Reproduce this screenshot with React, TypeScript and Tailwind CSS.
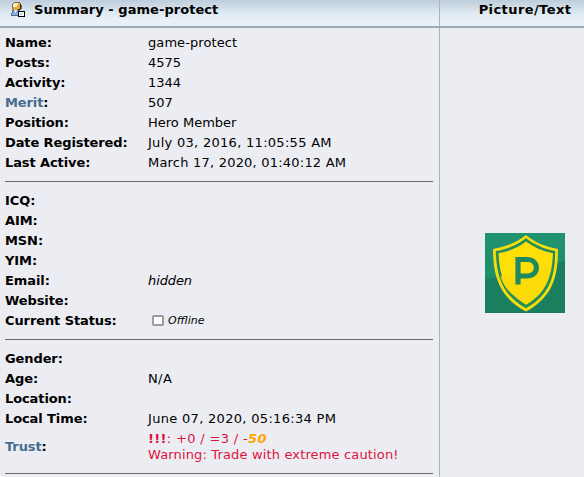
import React from 'react';

type Row = { label: string; value?: React.ReactNode; link?: boolean };

const general: Row[] = [
  { label: 'Name', value: <span className="tracking-[0.08px]">game-protect</span> },
  { label: 'Posts', value: '4575' },
  { label: 'Activity', value: '1344' },
  { label: 'Merit', value: '507', link: true },
  { label: 'Position', value: 'Hero Member' },
  { label: 'Date Registered', value: <span className="tracking-[0.29px]">July 03, 2016, 11:05:55 AM</span> },
  { label: 'Last Active', value: <span className="tracking-[0.21px]">March 17, 2020, 01:40:12 AM</span> },
];

const contact: Row[] = [
  { label: 'ICQ' },
  { label: 'AIM' },
  { label: 'MSN' },
  { label: 'YIM' },
  { label: 'Email', value: <i className="tracking-[-0.1px]">hidden</i> },
  { label: 'Website' },
  {
    label: 'Current Status',
    value: (
      <span className="flex items-center">
        <span className="mb-px ml-1 mr-[4px] h-[11px] w-3 rounded-[2px] border-2 border-[#9c9c9c] bg-white" />
        <i className="text-[11px]">Offline</i>
      </span>
    ),
  },
];

const personal: Row[] = [
  { label: 'Gender' },
  { label: 'Age', value: <span className="tracking-[0.4px]">N/A</span> },
  { label: 'Location' },
  { label: 'Local Time', value: <span className="tracking-[0.31px]">June 07, 2020, 05:16:34 PM</span> },
];

function Line({ label, value, link }: Row) {
  return (
    <div className="flex h-5 items-center">
      <b className="w-[143px] shrink-0 tracking-[-0.1px]">
        <span className={link ? 'text-[#476c8e]' : ''}>{label}</span>:
      </b>
      <span>{value}</span>
    </div>
  );
}

function Rule() {
  return <div className="h-px w-[428px] bg-[#67696d]" />;
}

function MemberIcon() {
  return (
    <svg className="shrink-0" width="16" height="18" viewBox="0 0 16 18" shapeRendering="crispEdges">
      <path d="M4 2h6v1h1v2h1v4h-1v1h-1v1H4v-1H3V9H2V4h1V3h1z" fill="#77694e" />
      <path d="M4 3h6v2h1v4h-1v1H4V9H3V4h1z" fill="#e5aa38" />
      <path d="M4 3h4v2H7v2H3V4h1z" fill="#fff0c8" />
      <path d="M10 4h1v5h-1v1H8V9h2z" fill="#342b1b" />
      <path d="M2 10h8v1h1v5H1v-3h1z" fill="#4e7297" />
      <path d="M3 11h5v4H2v-2h1z" fill="#8bb0d6" />
      <path d="M4 10h3v1H6v2H5v-2H4z" fill="#e7edf4" />
      <path d="M8 11h7v6H8z" fill="#000" />
      <path d="M9 12h5v4H9z" fill="#fff" />
      <path d="M10 13h1v1h-1zM12 13h1v1h-1zM11 14h1v1h-1z" fill="#9acbc5" />
    </svg>
  );
}

function Shield() {
  return (
    <svg width="80" height="80" viewBox="0 0 80 80">
      <defs>
        <linearGradient id="field" x2="0" y2="1">
          <stop stopColor="#219370" />
          <stop offset="1" stopColor="#1b8966" />
        </linearGradient>
      </defs>
      <path fill="url(#field)" d="M0 0h80v80H0z" />
      <path fill="#197f5e" d="M0 46C28 42 56 38 80 27v53H0z" />
      <path d="M41 2C49 9 61 14 73 16C73 43 68 64 41 78.5C14 64 8 43 8 16C21 14 32 9 41 2Z" fill="#f9dc0b" />
      <path d="M41 5.2C49 11.5 60 16.3 70.2 18C70 43 65 62 41 75.3C17 62 11.5 43 10.8 18C22 16.3 33 11.5 41 5.2Z" fill="#248d59" />
      <path d="M41 8.5C49 14.5 58 18.5 68 20.2C67 43 62 59.5 41 71.8C20 59.5 14.5 43 13.5 20.2C24 18.5 33 14.5 41 8.5Z" fill="#ffdf08" />
      <path d="M15.5 43.5C33 41 52 38 66 32C63.5 51 57 61.5 41 71C27 63 19 55 15.5 43.5Z" fill="#fbdb07" />
      <path d="M33 51.5V26.5h9c12.5 0 12.5 16.5 0 16.5h-9" fill="none" stroke="#218961" strokeWidth="5.2" />
    </svg>
  );
}

export default function App() {
  return (
    <main className="h-[477px] w-[584px] overflow-hidden bg-[#ecedf3] font-[Verdana,'DejaVu_Sans',sans-serif] text-[13px] leading-4 text-black">
      <header className="flex h-7 border-b-2 border-[#9baab9] bg-linear-to-b from-[#bdcddb] via-[#dce7ef] via-45% to-[#e8f0f7] to-75% font-bold">
        <div className="flex w-[440px] shrink-0 border-r border-[#adb1b8] pl-[10px]">
          <MemberIcon />
          <span className="ml-2 mt-0.5 tracking-[0.05px]">Summary - game-protect</span>
        </div>
        <div className="mt-0.5 w-[170px] shrink-0 text-center tracking-[0.42px]">Picture/Text</div>
      </header>
      <div className="flex h-[449px]">
        <section className="w-[440px] shrink-0 border-r border-[#adb1b8] pl-[5px] pt-[5px]">
          {general.map((r) => <Line key={r.label} {...r} />)}
          <div className="pb-[9px] pt-2"><Rule /></div>
          {contact.map((r) => <Line key={r.label} {...r} />)}
          <div className="pb-[9px] pt-2"><Rule /></div>
          {personal.map((r) => <Line key={r.label} {...r} />)}
          <div className="mb-[10px] mt-[2px] flex h-8 items-center">
            <b className="w-[143px] shrink-0 tracking-[-0.1px]"><span className="text-[#476c8e]">Trust</span>:</b>
            <div className="text-[#dc143c]">
              <div className="tracking-[0.34px]"><b>!!!</b>: +0 / =3 / -<b className="italic text-[#ffa500]">50</b></div>
              <div className="tracking-[0.15px]">Warning: Trade with extreme caution!</div>
            </div>
          </div>
          <Rule />
        </section>
        <aside className="flex-1 pl-[45px] pt-[205px]"><Shield /></aside>
      </div>
    </main>
  );
}
